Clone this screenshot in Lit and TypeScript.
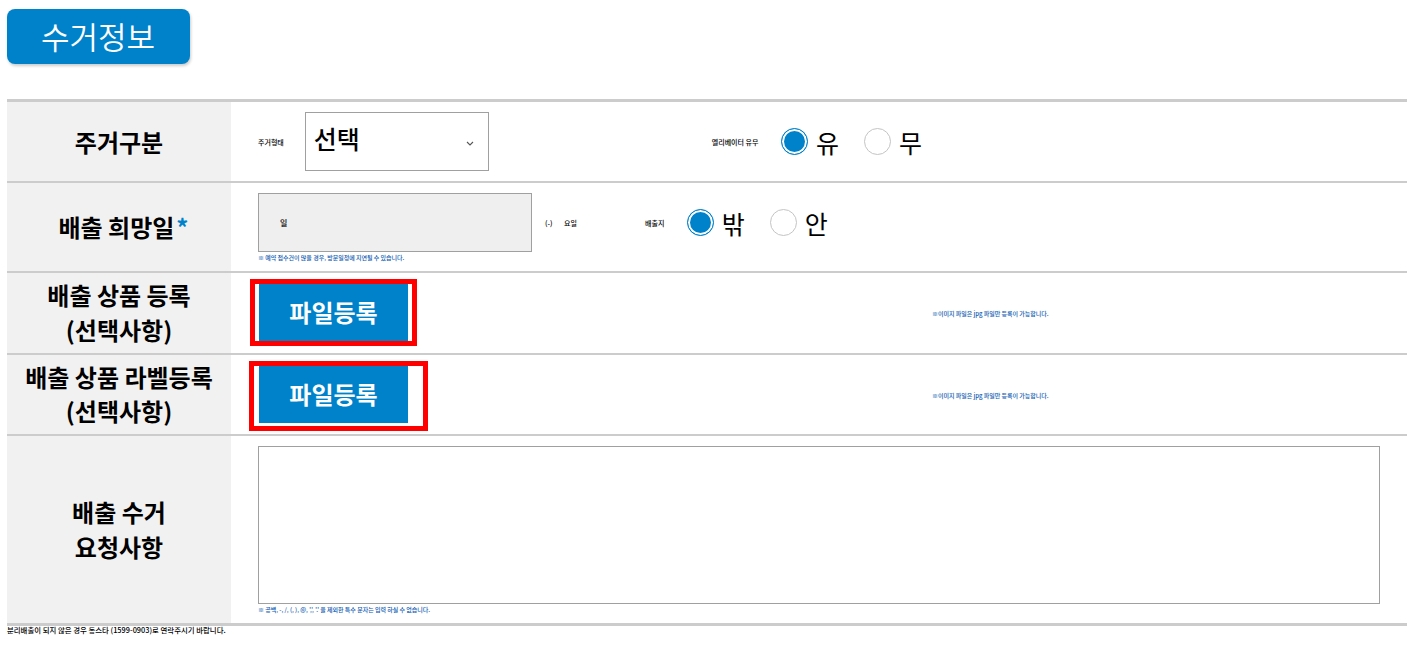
import { LitElement, html, css } from "lit";
import { customElement } from "lit/decorators.js";

@customElement("app-root")
export class AppRoot extends LitElement {
  static styles = css`
    :host {
      display: block;
      width: 1420px;
      height: 645px;
      overflow: hidden;
      background: #fff;
      font-family: "Noto Sans CJK KR", "Noto Sans", sans-serif;
      color: #000;
    }
    .page { padding: 9px 13px 0 7px; }
    .title {
      width: 183px;
      height: 55px;
      box-sizing: border-box;
      background: #0082cb;
      color: #fff;
      border-radius: 8px;
      box-shadow: 1px 2px 3px rgba(0, 0, 0, 0.2);
      font-size: 31px;
      font-weight: 350;
      line-height: 53px;
      text-align: center;
      padding-right: 1px;
    }
    .table {
      margin-top: 35px;
      border-top: 3px solid #ccc;
      border-bottom: 3px solid #ccc;
    }
    .row { display: flex; border-bottom: 2px solid #ccc; }
    .row:last-child { border-bottom: 0; }
    .r1 { height: 79px; }
    .r2 { height: 88px; }
    .r3 { height: 80px; }
    .r4 { height: 79px; }
    .r5 { height: 187px; }
    .head {
      width: 224px;
      flex: none;
      box-sizing: border-box;
      background: #f1f1f1;
      display: flex;
      align-items: center;
      justify-content: center;
      text-align: center;
      font-size: 24px;
      font-weight: 700;
      line-height: 35px;
      padding-bottom: 2px;
    }
    .r1 .head { padding-bottom: 1px; }
    .r2 .head { padding-left: 9px; }
    .r4 .head { line-height: 34px; }
    .star { color: #0082cb; margin-left: 2px; }
    .body { flex: 1; position: relative; min-width: 0; }
    .tiny { font-size: 7px; line-height: 8px; white-space: nowrap; font-weight: 500; }
    .note { font-size: 6px; line-height: 8px; color: #0a58b0; white-space: nowrap; font-weight: 500; letter-spacing: -0.03px; }
    .line { display: flex; align-items: center; }
    .r1 .line { height: 59px; margin-top: 10px; padding-left: 27px; }
    .select {
      width: 184px;
      height: 59px;
      box-sizing: border-box;
      border: 1px solid #a0a0a0;
      margin-left: 21px;
      padding: 6px 8px 0;
      display: flex;
      justify-content: space-between;
      font-size: 25px;
      line-height: 38px;
      font-weight: 500;
      flex: none;
    }
    .select svg { margin: 22px 6px 0 0; }
    .gap1 { width: 223px; flex: none; }
    .gap2 { width: 22.5px; flex: none; }
    .radio {
      width: 27px;
      height: 27px;
      box-sizing: border-box;
      border-radius: 50%;
      border: 1px solid #c4c4c4;
      flex: none;
    }
    .radio.on {
      border: 1px solid #0082cb;
      background: #0082cb;
      box-shadow: inset 0 0 0 2px #fff;
    }
    .rlabel { font-size: 25px; line-height: 30px; margin-left: 8px; width: 48px; flex: none; }
    .r2 .line { height: 59px; margin-top: 10px; padding-left: 27px; }
    .date {
      width: 274px;
      height: 59px;
      box-sizing: border-box;
      border: 1px solid #a0a0a0;
      background: #efefef;
      padding-left: 21px;
      display: flex;
      align-items: center;
      flex: none;
    }
    .date .tiny { font-size: 8px; color: #333; font-weight: 700; }
    .m1 { margin-left: 13px; width: 19px; flex: none; }
    .m2 { width: 81px; flex: none; }
    .r2 .note { margin: 2px 0 0 27px; }
    .outline {
      border: 5px solid #f00;
      box-sizing: border-box;
      margin: 6px 0 0 19px;
      padding: 0 4px 0 4px;
      background: #fff;
    }
    .r3 .outline { width: 167px; height: 67px; }
    .r4 .outline { width: 179px; height: 70px; margin-left: 18px; padding: 0 0 3px 5px; }
    .btn {
      width: 149px;
      height: 100%;
      background: #0082cb;
      color: #fff;
      font-size: 24px;
      font-weight: 700;
      display: flex;
      align-items: center;
      justify-content: center;
      padding-bottom: 2px;
      box-sizing: border-box;
    }
    .filenote { position: absolute; left: 701px; top: 37px; }
    .area {
      display: block;
      width: 1122px;
      height: 158px;
      box-sizing: border-box;
      border: 1px solid #a0a0a0;
      margin: 10px 0 0 27px;
      background: #fff;
    }
    .r5 .note { margin: 2px 0 0 27px; }
    .foot { font-size: 7.4px; line-height: 7px; white-space: nowrap; font-weight: 500; }
  `;

  render() {
    return html`
      <div class="page">
        <div class="title">수거정보</div>
        <div class="table">
          <div class="row r1">
            <div class="head">주거구분</div>
            <div class="body">
              <div class="line">
                <span class="tiny">주거형태</span>
                <div class="select">
                  <span>선택</span>
                  <svg width="8" height="5" viewBox="0 0 8 5" fill="none" stroke="#555" stroke-width="1.1"><path d="M1 1l3 3 3-3" /></svg>
                </div>
                <span class="gap1"></span>
                <span class="tiny">엘리베이터 유무</span>
                <span class="gap2"></span>
                <span class="radio on"></span><span class="rlabel">유</span>
                <span class="radio"></span><span class="rlabel">무</span>
              </div>
            </div>
          </div>
          <div class="row r2">
            <div class="head"><span>배출 희망일<span class="star">*</span></span></div>
            <div class="body">
              <div class="line">
                <div class="date"><span class="tiny">일</span></div>
                <span class="tiny m1">(-)</span>
                <span class="tiny m2">요일</span>
                <span class="tiny">배출지</span>
                <span class="gap2"></span>
                <span class="radio on"></span><span class="rlabel">밖</span>
                <span class="radio"></span><span class="rlabel">안</span>
              </div>
              <div class="note">※ 예약 접수건이 많을 경우, 방문일정에 지연될 수 있습니다.</div>
            </div>
          </div>
          <div class="row r3">
            <div class="head"><span>배출 상품 등록<br />(선택사항)</span></div>
            <div class="body">
              <div class="outline"><div class="btn">파일등록</div></div>
              <div class="note filenote">※이미지 파일은 jpg 파일만 등록이 가능합니다.</div>
            </div>
          </div>
          <div class="row r4">
            <div class="head"><span>배출 상품 라벨등록<br />(선택사항)</span></div>
            <div class="body">
              <div class="outline"><div class="btn">파일등록</div></div>
              <div class="note filenote">※이미지 파일은 jpg 파일만 등록이 가능합니다.</div>
            </div>
          </div>
          <div class="row r5">
            <div class="head"><span>배출 수거<br />요청사항</span></div>
            <div class="body">
              <div class="area"></div>
              <div class="note">※ 공백, -, /, (, ), @, ',', '.' 을 제외한 특수 문자는 입력 하실 수 없습니다.</div>
            </div>
          </div>
        </div>
        <div class="foot">분리배출이 되지 않은 경우 동스타 (1599-0903)로 연락주시기 바랍니다.</div>
      </div>
    `;
  }
}
